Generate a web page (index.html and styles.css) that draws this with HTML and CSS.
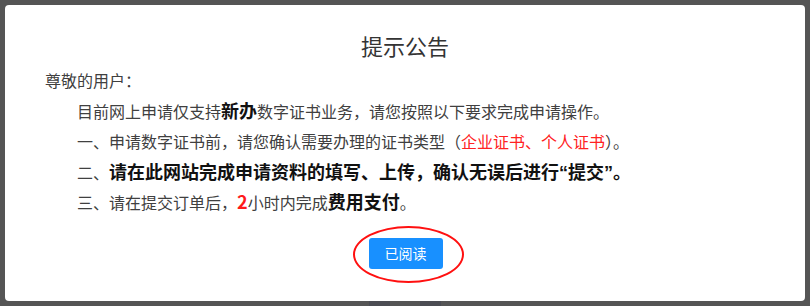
FILE: index.html
```html
<!DOCTYPE html>
<html lang="zh-CN">
<head>
<meta charset="utf-8">
<title>提示公告</title>
<link rel="stylesheet" href="styles.css">
</head>
<body>
<div class="page">
  <div class="modal">
    <h1 class="title">提示公告</h1>
    <div class="content">
      <p class="greet">尊敬的用户：</p>
      <p class="item">目前网上申请仅支持<b class="big">新办</b>数字证书业务，请您按照以下要求完成申请操作。</p>
      <p class="item">一、申请数字证书前，请您确认需要办理的证书类型（<span class="red">企业证书、个人证书</span>）。</p>
      <p class="item">二、<b class="big">请在此网站完成申请资料的填写、上传，确认无误后进行<span class="quote">“</span>提交<span class="quote">”</span>。</b></p>
      <p class="item">三、请在提交订单后，<b class="big red-strong">2</b>小时内完成<b class="big">费用支付</b>。</p>
    </div>
    <div class="actions">
      <button class="btn">已阅读<span class="ring"></span></button>
    </div>
  </div>
  <div class="under">
    <span class="shade s1"></span>
    <span class="shade s2"></span>
  </div>
</div>
</body>
</html>
```

FILE: styles.css
```css
html, body {
  margin: 0;
  padding: 0;
  background: #555555;
}
.page {
  width: 810px;
  height: 306px;
  overflow: hidden;
  display: flex;
  flex-direction: column;
  font-family: "Noto Sans CJK SC", "Noto Sans", sans-serif;
}
.modal {
  margin: 5px 5px 0 5px;
  height: 296px;
  background: #ffffff;
  border-radius: 4px;
  box-sizing: border-box;
  padding-top: 25px;
}
.title {
  margin: 0;
  font-size: 22px;
  line-height: 30px;
  font-weight: 400;
  color: #333333;
  text-align: center;
}
.content {
  padding: 5px 40px 0 40px;
  font-size: 16px;
  line-height: 30.5px;
  color: #404040;
}
.content p {
  margin: 0;
}
.item {
  text-indent: 2em;
}
.big {
  font-size: 18px;
  line-height: 1;
  font-weight: 700;
  color: #111111;
}
.quote {
  font-family: "Liberation Sans", sans-serif;
}
.red {
  color: #ff2222;
}
.red-strong {
  color: #ff1a1a;
}
.actions {
  display: flex;
  justify-content: center;
  margin-top: 20px;
}
.btn {
  position: relative;
  width: 74px;
  height: 31px;
  border: none;
  border-radius: 3px;
  background: #1890ff;
  color: #ffffff;
  font-family: "Noto Sans CJK SC", "Noto Sans", sans-serif;
  font-size: 14px;
  padding: 0;
  margin-left: 1px;
}
.ring {
  position: absolute;
  left: -16px;
  top: -12px;
  width: 107px;
  height: 53px;
  border: 2.5px solid #ff1010;
  border-radius: 50%;
}
.under {
  flex: 1;
  display: flex;
}
.shade {
  height: 5px;
  background: #4b4c53;
}
.s1 {
  margin-left: 369px;
  width: 21px;
}
.s2 {
  margin-left: 30px;
  width: 21px;
}
```
